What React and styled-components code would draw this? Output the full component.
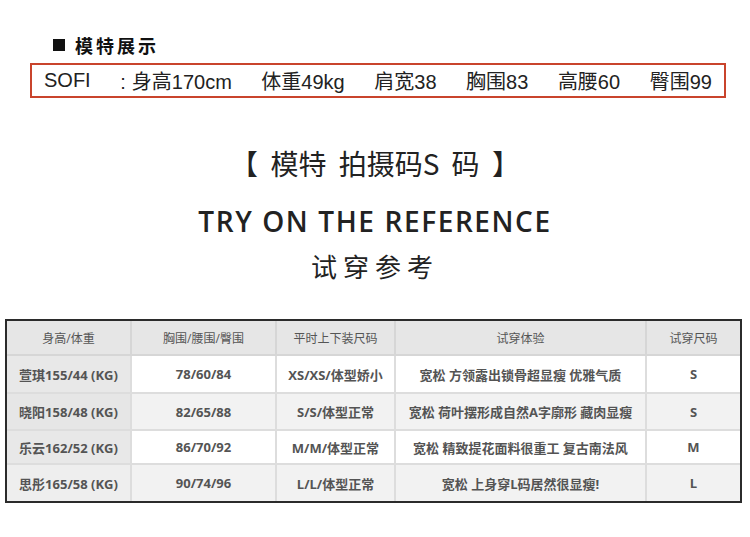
import styled, { createGlobalStyle } from "styled-components";

const GlobalStyle = createGlobalStyle`
  body {
    margin: 0;
    background: #ffffff;
    font-family: "Liberation Sans", "Noto Sans CJK SC", sans-serif;
  }
`;

const Page = styled.div`
  width: 750px;
  height: 537px;
  overflow: hidden;
  background: #ffffff;
`;

const SectionTitle = styled.div`
  display: flex;
  align-items: center;
  padding: 35px 0 0 53px;
  line-height: 20px;
  font-size: 18px;
  font-weight: 700;
  letter-spacing: 3px;
  color: #111;
  font-family: "Noto Sans CJK SC", sans-serif;
`;

const Square = styled.span`
  width: 12px;
  height: 12px;
  background: #111;
  margin-right: 10px;
`;

const ModelBox = styled.div`
  margin: 8px 24px 0 30px;
  height: 35px;
  box-sizing: border-box;
  border: 2px solid #c9442c;
  display: flex;
  align-items: center;
  justify-content: space-between;
  padding: 0 12px 1px 12px;
  font-size: 20px;
  color: #222;
`;

const Stat = styled.span`
  white-space: nowrap;
`;

const Colon = styled.span`
  margin-right: 6px;
`;

const Heading = styled.div`
  text-align: center;
  line-height: 36px;
  color: #222;
  margin-top: ${(p) => p.$top}px;
  font-size: ${(p) => p.$size}px;
  font-weight: ${(p) => p.$weight || 400};
  letter-spacing: ${(p) => p.$spacing || 0}px;
  word-spacing: ${(p) => p.$words || 0}px;
  font-family: ${(p) =>
    p.$latin
      ? `"Open Sans", "Noto Sans", sans-serif`
      : `"Noto Sans CJK SC", sans-serif`};
`;

const Table = styled.table`
  margin: 35px 0 0 5px;
  width: 733px;
  border-collapse: separate;
  border-spacing: 0;
  border: 2px solid #2b2b2b;
  font-family: "Open Sans", "Noto Sans CJK SC", sans-serif;
  table-layout: fixed;
`;

const HeadCell = styled.th`
  box-sizing: border-box;
  height: 35px;
  background: #e6e6e6;
  color: #555;
  font-size: 12px;
  font-weight: 400;
  border-right: 2px solid #d6d6d6;
  border-bottom: 2px solid #d6d6d6;
  padding: 0;

  &:last-child {
    border-right: none;
  }
`;

const Row = styled.tr`
  background: ${(p) => (p.$alt ? "#f2f2f2" : "#ffffff")};

  &:last-child td {
    border-bottom: none;
  }
`;

const Cell = styled.td`
  box-sizing: border-box;
  height: ${(p) => p.$h}px;
  text-align: center;
  color: #545454;
  font-size: 13px;
  font-weight: 700;
  border-right: 2px solid #dddddd;
  border-bottom: 2px solid #dddddd;
  padding: 0;
  background: ${(p) => p.$bg || "transparent"};

  &:last-child {
    border-right: none;
  }
`;

const stats = ["体重49kg", "肩宽38", "胸围83", "高腰60", "臀围99"];

const cols = [
  { label: "身高/体重", w: 125 },
  { label: "胸围/腰围/臀围", w: 145 },
  { label: "平时上下装尺码", w: 119 },
  { label: "试穿体验", w: 251 },
  { label: "试穿尺码", w: 93 },
];

const rows = [
  { cells: ["萱琪155/44 (KG)", "78/60/84", "XS/XS/体型娇小", "宽松 方领露出锁骨超显瘦 优雅气质", "S"], h: 38, first: "#e8e8e8" },
  { cells: ["晓阳158/48 (KG)", "82/65/88", "S/S/体型正常", "宽松 荷叶摆形成自然A字廓形 藏肉显瘦", "S"], h: 37, first: "#e6e6e6" },
  { cells: ["乐云162/52 (KG)", "86/70/92", "M/M/体型正常", "宽松 精致提花面料很重工 复古南法风", "M"], h: 34, first: "#e8e8e8" },
  { cells: ["思彤165/58 (KG)", "90/74/96", "L/L/体型正常", "宽松 上身穿L码居然很显瘦!", "L"], h: 36, first: "#eeeeee" },
];

export default function App() {
  return (
    <Page>
      <GlobalStyle />
      <SectionTitle>
        <Square />
        模特展示
      </SectionTitle>
      <ModelBox>
        <Stat>SOFI</Stat>
        <Stat>
          <Colon>:</Colon>身高170cm
        </Stat>
        {stats.map((s) => (
          <Stat key={s}>{s}</Stat>
        ))}
      </ModelBox>

      <Heading $top={47} $size={28} $words={6}>
        【 模特 拍摄码S 码 】
      </Heading>
      <Heading $top={22} $size={28} $weight={600} $spacing={1.6} $latin>
        TRY ON THE REFERENCE
      </Heading>
      <Heading $top={9} $size={26} $spacing={6}>
        试穿参考
      </Heading>

      <Table>
        <colgroup>
          {cols.map((c) => (
            <col key={c.label} style={{ width: c.w }} />
          ))}
        </colgroup>
        <thead>
          <tr>
            {cols.map((c) => (
              <HeadCell key={c.label}>{c.label}</HeadCell>
            ))}
          </tr>
        </thead>
        <tbody>
          {rows.map((r, i) => (
            <Row key={r.cells[0]} $alt={i % 2 === 1}>
              {r.cells.map((v, j) => (
                <Cell key={j} $h={r.h} $bg={j === 0 ? r.first : undefined}>
                  {v}
                </Cell>
              ))}
            </Row>
          ))}
        </tbody>
      </Table>
    </Page>
  );
}
